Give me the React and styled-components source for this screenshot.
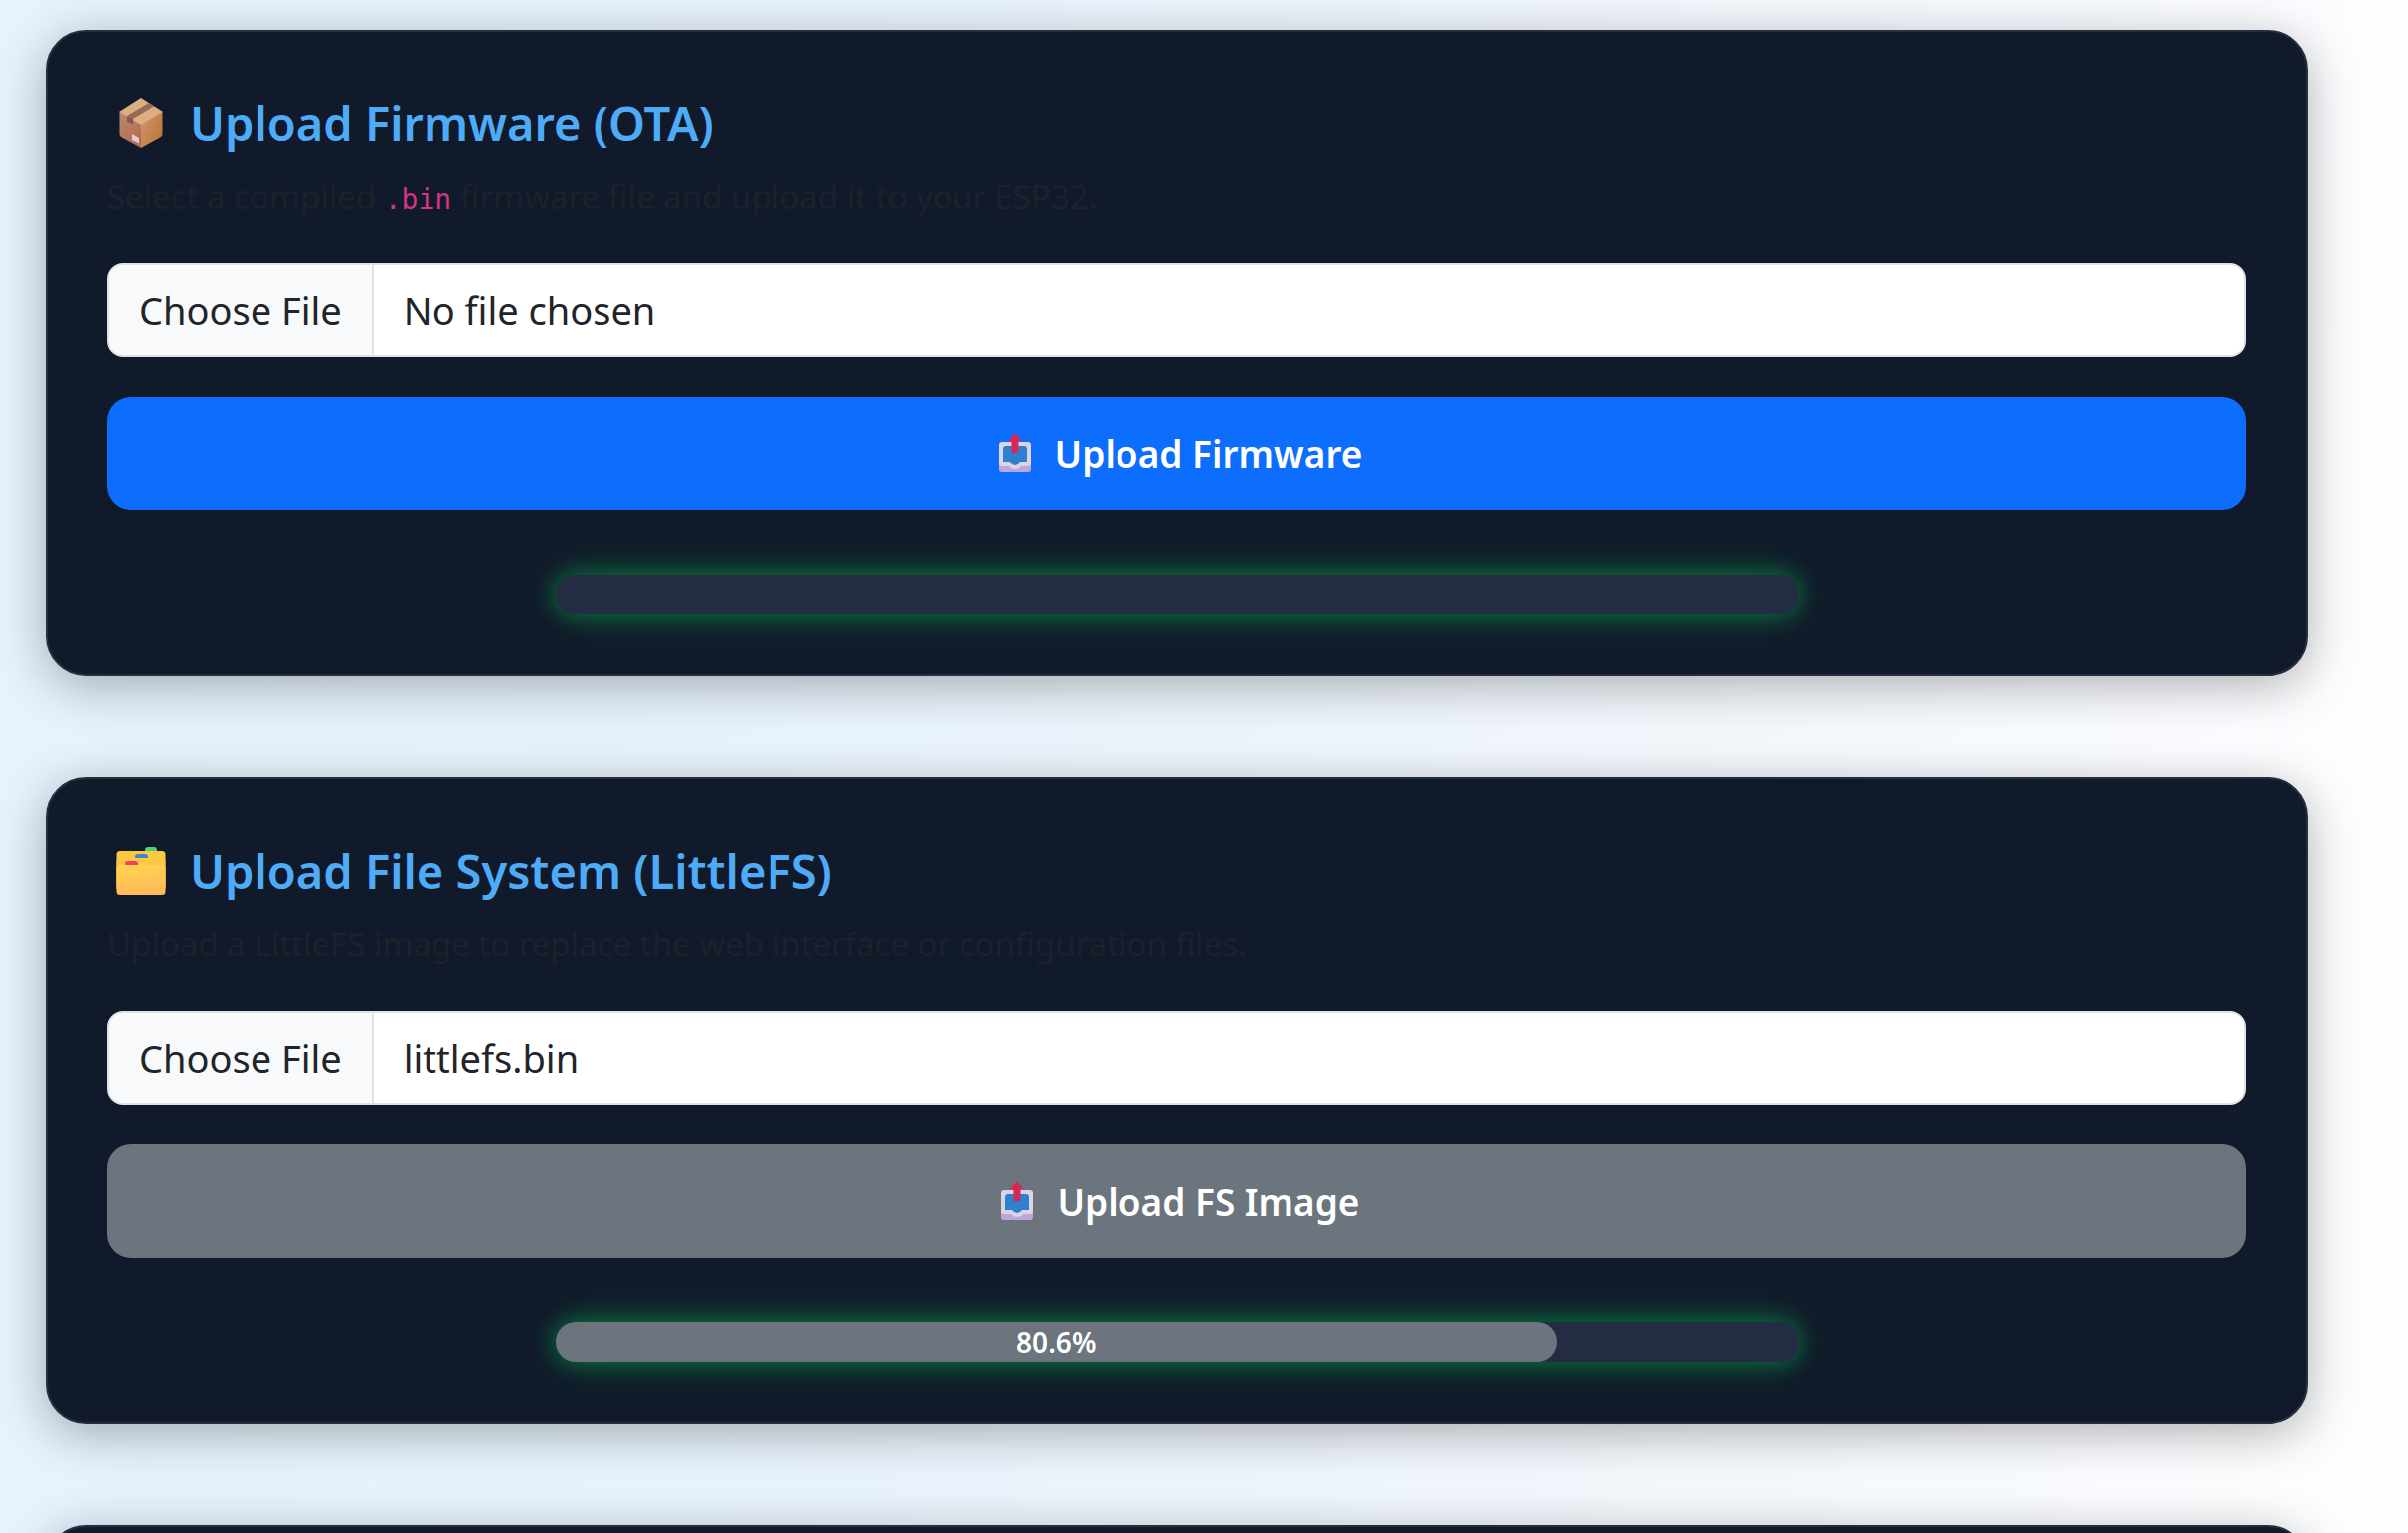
import React, { useEffect, useId, useRef } from "react";
import styled, { createGlobalStyle } from "styled-components";

const GlobalStyle = createGlobalStyle`
  *, *::before, *::after { box-sizing: border-box; }
  body {
    margin: 0;
    min-height: 100vh;
    background: linear-gradient(95deg, #e4f3fd 0%, #e8f3fc 33%, #eef5fc 55%, #fcfdff 94%);
    font-family: "Noto Sans", "Open Sans", sans-serif;
    color: #212529;
  }
`;

const Page = styled.main`
  display: flex;
  flex-direction: column;
  gap: 102px;
  height: 100vh;
  overflow: hidden;
  padding: 30px 101px 0 46px;
`;

const Card = styled.section`
  flex: none;
  padding: 60px;
  background: #111a2a;
  border: 2px solid #272f3f;
  border-radius: 40px;
  box-shadow: 0 10px 50px rgba(0, 0, 0, 0.3);
`;

const Title = styled.h2`
  display: flex;
  align-items: center;
  gap: 15px;
  margin: 0 0 15px;
  font-size: 47px;
  line-height: 64px;
  font-weight: 600;
  color: #4dabf7;
`;

const TitleIcon = styled.svg`
  width: 68px;
  height: 60px;
  flex: none;
`;

const Description = styled.p`
  margin: 0 0 40px;
  font-size: 33px;
  line-height: 54px;
  color: #1b2229;
`;

const Code = styled.code`
  font-family: "DejaVu Sans Mono", "Liberation Mono", monospace;
  font-size: 28px;
  line-height: 1;
  color: #d63384;
`;

const Form = styled.form`
  display: flex;
  flex-direction: column;
  gap: 40px;
`;

const FileInput = styled.input`
  display: block;
  width: 100%;
  height: 94px;
  padding: 0;
  overflow: hidden;
  font: inherit;
  font-size: 38px;
  line-height: 90px;
  color: #212529;
  background: #fff;
  border: 2px solid #dee2e6;
  border-radius: 16px;

  &::file-selector-button {
    height: 90px;
    margin: 0 30px 0 0;
    padding: 0 30px;
    font: inherit;
    color: #212529;
    background: #f8f9fa;
    border: 0 solid #dee2e6;
    border-right-width: 2px;
  }
`;

const Button = styled.button`
  display: flex;
  align-items: center;
  justify-content: center;
  gap: 16px;
  width: 100%;
  height: 114px;
  border: 0;
  border-radius: 24px;
  background: ${(p) => (p.$busy ? "#6c757d" : "#0d6efd")};
  color: #fff;
  font: inherit;
  font-size: 37px;
  font-weight: 600;
`;

const ButtonIcon = styled.svg`
  width: 48px;
  height: 44px;
  flex: none;
`;

const Track = styled.div`
  width: 100%;
  max-width: 1250px;
  height: 40px;
  margin: 65px auto 0;
  border-radius: 20px;
  background: #232c43;
  box-shadow: 0 0 25px rgba(0, 255, 100, 0.4), 0 0 50px rgba(0, 255, 100, 0.14);
`;

const Fill = styled.div`
  display: flex;
  align-items: center;
  justify-content: center;
  height: 100%;
  border-radius: 20px;
  background: #6c757d;
  color: #fff;
  font-size: 28px;
  font-weight: 600;
`;

function PackageIcon() {
  const id = useId();
  return (
    <TitleIcon viewBox="0 0 68 60" aria-hidden="true">
      <defs>
        <linearGradient id={id + "l"} x1="0" y1="0" x2="0.6" y2="1">
          <stop offset="0" stopColor="#ba8873" />
          <stop offset="1" stopColor="#b56d51" />
        </linearGradient>
        <linearGradient id={id + "r"} x1="0" y1="0" x2="1" y2="0.8">
          <stop offset="0" stopColor="#d6956f" />
          <stop offset="1" stopColor="#b87738" />
        </linearGradient>
      </defs>
      <path d="M12.500 19 L34 31 V55 L14 44 Q12.500 43 12.500 41Z" fill={`url(#${id}l)`} />
      <path d="M55.500 19 L34 31 V55 L54 44 Q55.500 43 55.500 41Z" fill={`url(#${id}r)`} />
      <path d="M34 5 L56 19 L34 32 L12 19Z" fill="#dcae80" />
      <path d="M42 10 L47 13.500 L26 26 L20 23Z" fill="#976b58" />
      <path d="M20 23 L26 26 V31.500 L20 28.500Z" fill="#83594e" />
      <path d="M25 41 L32 45 V50.500 L25 47Z" fill="#dfcbd9" />
    </TitleIcon>
  );
}

function DividersIcon() {
  const id = useId();
  return (
    <TitleIcon viewBox="0 0 68 60" aria-hidden="true">
      <defs>
        <linearGradient id={id + "f"} x1="0.4" y1="0" x2="0.6" y2="1">
          <stop offset="0" stopColor="#ffd350" />
          <stop offset="1" stopColor="#ffb859" />
        </linearGradient>
      </defs>
      <path d="M38 12 V9 Q38 6 41 6 H47 Q50 6 50 9 V12Z" fill="#4fce7f" />
      <rect x="9.500" y="10" width="49" height="40" rx="3.500" fill="#fbc93c" />
      <path d="M28 19 V16 Q28 13 31 13 H38 Q41 13 41 16 V19Z" fill="#4384d0" />
      <path d="M9.500 20 Q9.500 17 13 17 H55 Q58.500 17 58.500 20 V46 H9.500Z" fill="#fdc744" />
      <path d="M18 25 V23 Q18 20 21 20 H28 Q31 20 31 23 V25Z" fill="#f83c5f" />
      <rect x="9.500" y="24" width="49" height="30" rx="3.500" fill={`url(#${id}f)`} />
    </TitleIcon>
  );
}

function OutboxIcon() {
  const id = useId();
  return (
    <ButtonIcon viewBox="0 0 48 44" aria-hidden="true">
      <defs>
        <linearGradient id={id + "a"} x1="0" y1="0" x2="1" y2="0">
          <stop offset="0" stopColor="#e82036" />
          <stop offset="1" stopColor="#c43070" />
        </linearGradient>
      </defs>
      <rect x="8" y="14" width="32" height="27" rx="3" fill="#bba7d8" />
      <path d="M11 11 H37 Q40 11 40 14 V33 Q40 35 37 35 H30 Q28 38 24 38 Q20 38 18 35 H11 Q8 35 8 33 V14 Q8 11 11 11Z" fill="#dcd4e4" />
      <path d="M15 15 H33 Q36 15 36 18 V31 H29 Q27 34 24 34 Q21 34 19 31 H12 V18 Q12 15 15 15Z" fill="#2e80d0" />
      <path d="M24 2 L31 10 H27.500 V22 H20.500 V10 H17Z" fill={`url(#${id}a)`} />
    </ButtonIcon>
  );
}

function FilePicker({ label, fileName }) {
  const ref = useRef(null);

  useEffect(() => {
    if (!fileName) return;
    const transfer = new DataTransfer();
    transfer.items.add(new File([""], fileName));
    ref.current.files = transfer.files;
  }, [fileName]);

  return <FileInput ref={ref} type="file" aria-label={label} />;
}

function UploadCard({ icon, title, description, fileName, action, busy, progress }) {
  return (
    <Card>
      <Title>
        {icon}
        {title}
      </Title>
      <Description>{description}</Description>
      <Form onSubmit={(event) => event.preventDefault()}>
        <FilePicker label={title} fileName={fileName} />
        <Button type="submit" disabled={busy} $busy={busy}>
          <OutboxIcon />
          {action}
        </Button>
      </Form>
      <Track role="progressbar" aria-label={action} aria-valuenow={progress}>
        {progress > 0 && <Fill style={{ width: `${progress}%` }}>{progress}%</Fill>}
      </Track>
    </Card>
  );
}

export default function App() {
  return (
    <>
      <GlobalStyle />
      <Page>
        <UploadCard
          icon={<PackageIcon />}
          title="Upload Firmware (OTA)"
          description={
            <>
              Select a compiled <Code>.bin</Code> firmware file and upload it to your ESP32.
            </>
          }
          action="Upload Firmware"
          progress={0}
        />
        <UploadCard
          icon={<DividersIcon />}
          title="Upload File System (LittleFS)"
          description="Upload a LittleFS image to replace the web interface or configuration files."
          fileName="littlefs.bin"
          action="Upload FS Image"
          busy
          progress={80.6}
        />
        <Card />
      </Page>
    </>
  );
}
